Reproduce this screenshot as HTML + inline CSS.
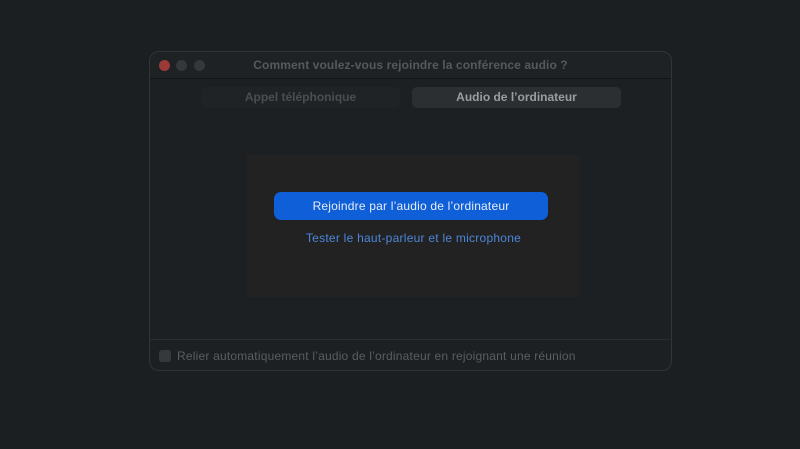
<!DOCTYPE html>
<html><head><style>
body{margin:0;width:800px;height:449px;background:#1b1f22;font-family:"Liberation Sans",sans-serif;position:relative;overflow:hidden}
.win{position:absolute;left:149px;top:51px;width:523px;height:320px;border:1px solid #30353a;border-radius:10px;background:#1c2023;box-sizing:border-box}
.tb{position:absolute;left:0;top:0;right:0;height:26px;border-bottom:1px solid #111416;background:#1e2225;border-radius:10px 10px 0 0}
.dot{position:absolute;top:8px;width:11px;height:11px;border-radius:50%}
.title{position:absolute;left:0;right:0;top:6px;text-align:center;color:#55595c;font-size:12px;font-weight:bold;letter-spacing:0.1px}
.tab{position:absolute;top:35px;height:21px;border-radius:5px;text-align:center;line-height:21px;font-size:12px;font-weight:bold}
.box{position:absolute;left:97px;top:103px;width:333px;height:142px;background:#222222}
.btn{position:absolute;left:27px;top:37px;width:274px;height:28px;border-radius:7px;background:#0e5fd8;color:#e8eef8;font-size:12px;text-align:center;line-height:28px;letter-spacing:0.2px}
.lnk{position:absolute;left:0;right:0;top:76px;text-align:center;color:#4d86d9;font-size:12px;letter-spacing:0.25px}
.sep{position:absolute;left:0;right:0;top:287px;border-top:1px solid #2a2e31}
.cb{position:absolute;left:9px;top:298px;width:12px;height:12px;border-radius:3px;background:#35393c}
.ft{position:absolute;left:27px;top:297px;color:#5a5e61;font-size:12px;letter-spacing:0.2px}
</style></head><body>
<div class="win">
<div class="tb">
<div class="dot" style="left:9px;background:#9b3a36"></div>
<div class="dot" style="left:26px;background:#34383b"></div>
<div class="dot" style="left:44px;background:#34383b"></div>
<div class="title">Comment voulez-vous rejoindre la conférence audio ?</div>
</div>
<div class="tab" style="left:51px;width:199px;background:#1f2326;color:#4a4e51">Appel téléphonique</div>
<div class="tab" style="left:262px;width:209px;background:#2b2f32;color:#9a9ea1">Audio de l’ordinateur</div>
<div class="box">
<div class="btn">Rejoindre par l’audio de l’ordinateur</div>
<div class="lnk">Tester le haut-parleur et le microphone</div>
</div>
<div class="sep"></div>
<div class="cb"></div>
<div class="ft">Relier automatiquement l’audio de l’ordinateur en rejoignant une réunion</div>
</div>
</body></html>
